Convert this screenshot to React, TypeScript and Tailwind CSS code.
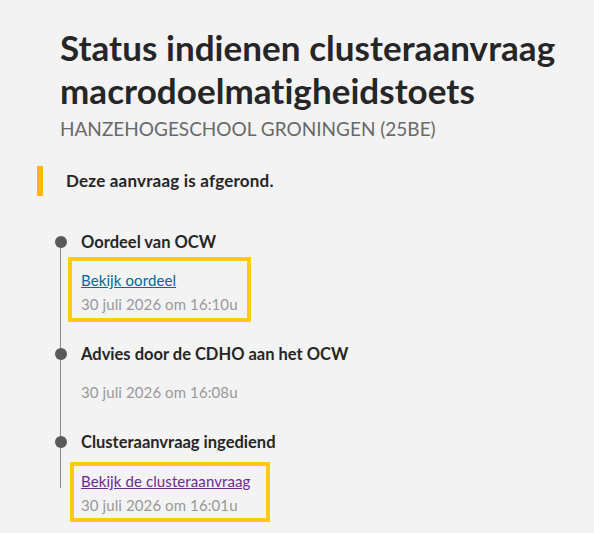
const events = [
  {
    title: 'Oordeel van OCW',
    link: 'Bekijk oordeel',
    visited: false,
    date: '30 juli 2026 om 16:10u',
    box: 'mt-[3px] -ml-[13px] pl-[9px] pr-[9px] pt-[7px] pb-[2px] border-[#ffc917]',
  },
  {
    title: 'Advies door de CDHO aan het OCW',
    link: null,
    visited: false,
    date: '30 juli 2026 om 16:08u',
    box: 'mt-[3px] -ml-[13px] pl-[9px] pr-[9px] pt-[7px] pb-[2px] border-transparent',
  },
  {
    title: 'Clusteraanvraag ingediend',
    link: 'Bekijk de clusteraanvraag',
    visited: true,
    date: '30 juli 2026 om 16:01u',
    box: 'mt-[8px] -ml-[11px] pl-[7px] pr-[15px] pt-[3px] pb-[1px] border-[#ffc917]',
  },
];

export default function App() {
  return (
    <div className="min-h-[533px] bg-[#f3f3f3] text-[#262626] font-['Lato',sans-serif] pt-[26px] pl-[60px] pr-4">
      <h1 className="text-[35px] leading-[43px] font-bold tracking-[0.05px]">
        Status indienen clusteraanvraag macrodoelmatigheidstoets
      </h1>
      <p className="mt-[5px] text-[19px] leading-6 uppercase text-[#696969]">
        Hanzehogeschool Groningen (25BE)
      </p>

      {/* Melding */}
      <div className="mt-[25px] -ml-[23px] flex items-center gap-[23px]">
        <div className="w-[6px] h-[30px] bg-[#ffb612]" />
        <p className="text-[17px] font-bold tracking-[0.2px]">Deze aanvraag is afgerond.</p>
      </div>

      {/* Tijdlijn */}
      <ol className="mt-[34px] relative">
        <span className="absolute left-0 top-[12px] h-[246px] w-px bg-[#8c8c8c]" />
        {events.map((ev, i) => (
          <li key={i} className="relative pl-[21px] pb-[20px]">
            <span className="absolute -left-[5px] top-[6px] w-[12px] h-[12px] rounded-full bg-[#595959]" />
            <h3 className="text-[16.5px] leading-6 font-bold">{ev.title}</h3>
            <div className={'inline-flex flex-col border-4 ' + ev.box}>
              {ev.link && (
                <a
                  href="#"
                  className={
                    'text-[15px] leading-[24px] underline tracking-[0.1px] ' +
                    (ev.visited ? 'text-[#6c2a91]' : 'text-[#01689b]')
                  }
                >
                  {ev.link}
                </a>
              )}
              <span className="text-[15px] leading-[24px] tracking-[0.1px] text-[#999999]">{ev.date}</span>
            </div>
          </li>
        ))}
      </ol>
    </div>
  );
}
